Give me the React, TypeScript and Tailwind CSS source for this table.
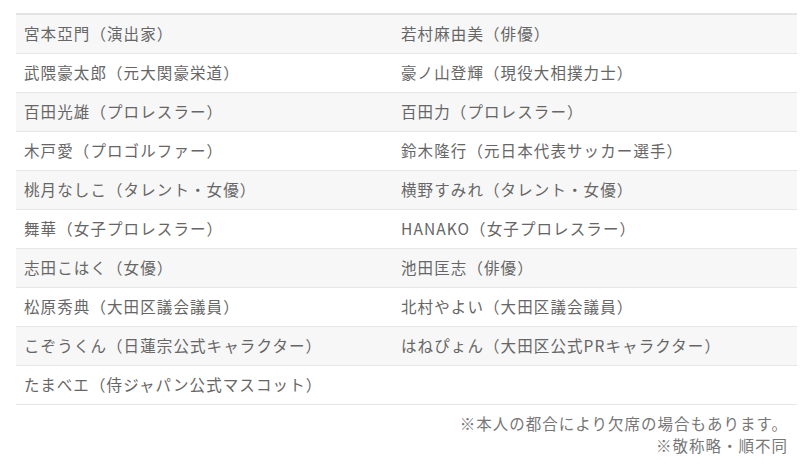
import React from "react";

const rows: [string, string][] = [
  ["宮本亞門（演出家）", "若村麻由美（俳優）"],
  ["武隈豪太郎（元大関豪栄道）", "豪ノ山登輝（現役大相撲力士）"],
  ["百田光雄（プロレスラー）", "百田力（プロレスラー）"],
  ["木戸愛（プロゴルファー）", "鈴木隆行（元日本代表サッカー選手）"],
  ["桃月なしこ（タレント・女優）", "横野すみれ（タレント・女優）"],
  ["舞華（女子プロレスラー）", "HANAKO（女子プロレスラー）"],
  ["志田こはく（女優）", "池田匡志（俳優）"],
  ["松原秀典（大田区議会議員）", "北村やよい（大田区議会議員）"],
  ["こぞうくん（日蓮宗公式キャラクター）", "はねぴょん（大田区公式PRキャラクター）"],
  ["たまべエ（侍ジャパン公式マスコット）", ""],
];

export default function App() {
  return (
    <div
      className="w-[800px] h-[470px] bg-white text-[#666666]"
      style={{ fontFamily: '"Noto Sans CJK JP", "Noto Sans", sans-serif' }}
    >
      <div className="pt-[13px] pl-[16px] pr-[3px]">
        <div className="border-t-2 border-[#e4e4e4]">
          {rows.map((r, i) => (
            <div
              key={i}
              className={`grid grid-cols-[377px_1fr] h-[39px] border-b border-[#e6e6e6] ${
                i % 2 === 0 ? "bg-[#f7f7f7]" : "bg-white"
              }`}
            >
              <div className="flex items-center pl-[8px] text-[15.5px] tracking-[1.1px]">{r[0]}</div>
              <div className="flex items-center pl-[8px] text-[15.5px] tracking-[1.1px]">{r[1]}</div>
            </div>
          ))}
        </div>
        <div className="pr-[9px] pt-[7px] text-right text-[15.5px] leading-[22px] tracking-[1px] text-[#777777]">
          <div>※本人の都合により欠席の場合もあります。</div>
          <div>※敬称略・順不同</div>
        </div>
      </div>
    </div>
  );
}
